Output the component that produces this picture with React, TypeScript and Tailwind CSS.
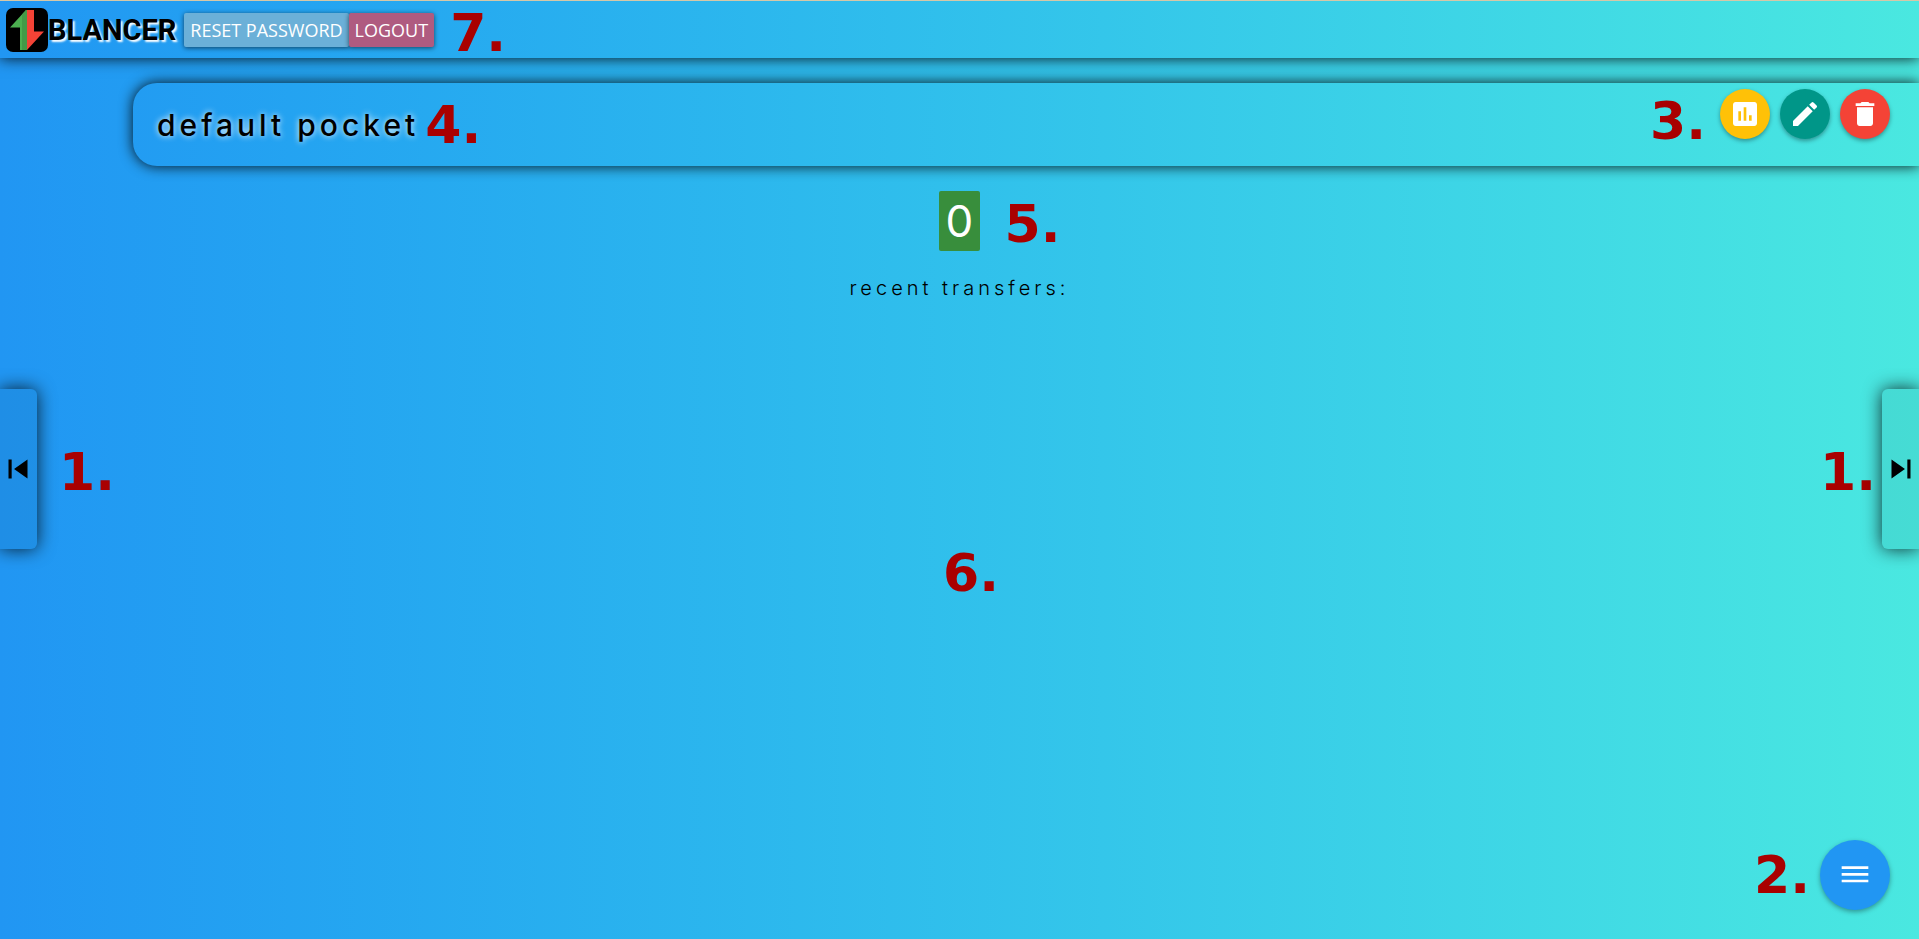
import type { ReactNode } from "react";
import {
  MdCreate,
  MdDehaze,
  MdDelete,
  MdInsertChart,
  MdSkipNext,
  MdSkipPrevious,
} from "react-icons/md";

function Marker({ children, className = "" }: { children: ReactNode; className?: string }) {
  return (
    <span
      className={`font-['DejaVu_Sans',sans-serif] text-[52px] leading-none font-bold whitespace-nowrap text-[#a90000] ${className}`}
    >
      {children}
    </span>
  );
}

function Logo() {
  return (
    <svg viewBox="0 0 42 44" className="h-11 w-[42px] shrink-0" aria-hidden="true">
      <rect width="42" height="44" rx="7" fill="#000" />
      <path d="M20 2h1v40h-7V19.500H4z" fill="#4caf50" />
      <path d="M16 6.500 20 2h1v40h-5z" fill="#439a47" />
      <path d="M21 2h7v21.500h10L21 42z" fill="#f44336" />
    </svg>
  );
}

function RoundButton({ label, color, children }: { label: string; color: string; children: ReactNode }) {
  return (
    <button
      type="button"
      aria-label={label}
      className={`flex size-[50px] items-center justify-center rounded-full text-[32px] text-white shadow-[0_2px_4px_rgba(0,0,0,0.35)] ${color}`}
    >
      {children}
    </button>
  );
}

export default function App() {
  return (
    <div className="relative flex min-h-screen flex-col overflow-hidden border-t border-[#d5c8a8] bg-linear-to-r from-[#2196f3] to-[#4ae8e0] font-[Inter,sans-serif] text-black">
      <header className="flex h-[57px] items-center pt-px pl-1.5 shadow-[0_0_14px_rgba(0,0,0,0.9)]">
        <a href="#" className="flex items-center">
          <Logo />
          <span className="font-[Roboto,sans-serif] text-[29px] leading-none font-bold [text-shadow:2px_2px_2px_#fff]">
            BLANCER
          </span>
        </a>
        <nav className="ml-2 flex font-['Open_Sans',sans-serif] text-lg leading-[34px] text-white">
          <button type="button" className="rounded-xs bg-[#6bb0d8] px-1.5 shadow-[0_1px_5px_rgba(0,0,0,0.6)]">
            RESET PASSWORD
          </button>
          <button type="button" className="rounded-xs bg-[#af5b80] px-1.5 shadow-[0_1px_5px_rgba(0,0,0,0.6)]">
            LOGOUT
          </button>
        </nav>
        <Marker className="ml-4 pt-1.5">7.</Marker>
      </header>

      <main>
        <section className="mt-[25px] ml-[133px] flex h-[83px] items-center rounded-l-3xl pl-6 shadow-[0_0_14px_rgba(0,0,0,0.9)]">
          <h1 className="text-[30px] leading-none font-medium tracking-[4px] [text-shadow:0_0_6px_#fff]">
            default pocket
          </h1>
          <Marker className="ml-1.5">4.</Marker>
          <div className="mr-[29px] ml-auto flex items-start gap-2.5 self-start pt-1.5">
            <Marker className="mr-1 pt-1.5">3.</Marker>
            <RoundButton label="Statistics" color="bg-[#ffc107]">
              <MdInsertChart />
            </RoundButton>
            <RoundButton label="Edit pocket" color="bg-[#009688]">
              <MdCreate />
            </RoundButton>
            <RoundButton label="Delete pocket" color="bg-[#f44336]">
              <MdDelete />
            </RoundButton>
          </div>
        </section>

        <section className="flex flex-col items-center pt-[25px]">
          <div className="relative">
            <p className="rounded-xs bg-[#388e3c] px-[7px] text-[44px] leading-[60px] text-white">0</p>
            <Marker className="absolute top-[7px] left-[66px]">5.</Marker>
          </div>
          <h2 className="mt-[25px] text-xl leading-6 font-light tracking-[4px]">recent transfers:</h2>
        </section>
      </main>

      <Marker className="absolute top-[546px] left-[943px]">6.</Marker>

      <div className="absolute inset-y-0 left-0 flex items-center gap-[22px] pb-0.5">
        <button
          type="button"
          aria-label="Previous pocket"
          className="flex h-40 w-[37px] items-center justify-center rounded-r-md bg-black/5 pr-0.5 text-[38px] shadow-[0_0_18px_rgba(0,0,0,0.8)]"
        >
          <MdSkipPrevious className="shrink-0" />
        </button>
        <Marker className="pt-1.5">1.</Marker>
      </div>

      <div className="absolute inset-y-0 right-0 flex items-center pb-0.5">
        <Marker className="mr-1.5 pt-1.5">1.</Marker>
        <button
          type="button"
          aria-label="Next pocket"
          className="flex h-40 w-[37px] items-center justify-center rounded-l-md bg-black/5 text-[38px] shadow-[0_0_18px_rgba(0,0,0,0.8)]"
        >
          <MdSkipNext className="shrink-0" />
        </button>
      </div>

      <div className="absolute right-[29px] bottom-[29px] flex items-center gap-2.5">
        <Marker>2.</Marker>
        <button
          type="button"
          aria-label="Menu"
          className="flex size-[70px] items-center justify-center rounded-full bg-[#2196f3] text-[32px] text-white shadow-[0_2px_5px_rgba(0,0,0,0.35)]"
        >
          <MdDehaze />
        </button>
      </div>
    </div>
  );
}
